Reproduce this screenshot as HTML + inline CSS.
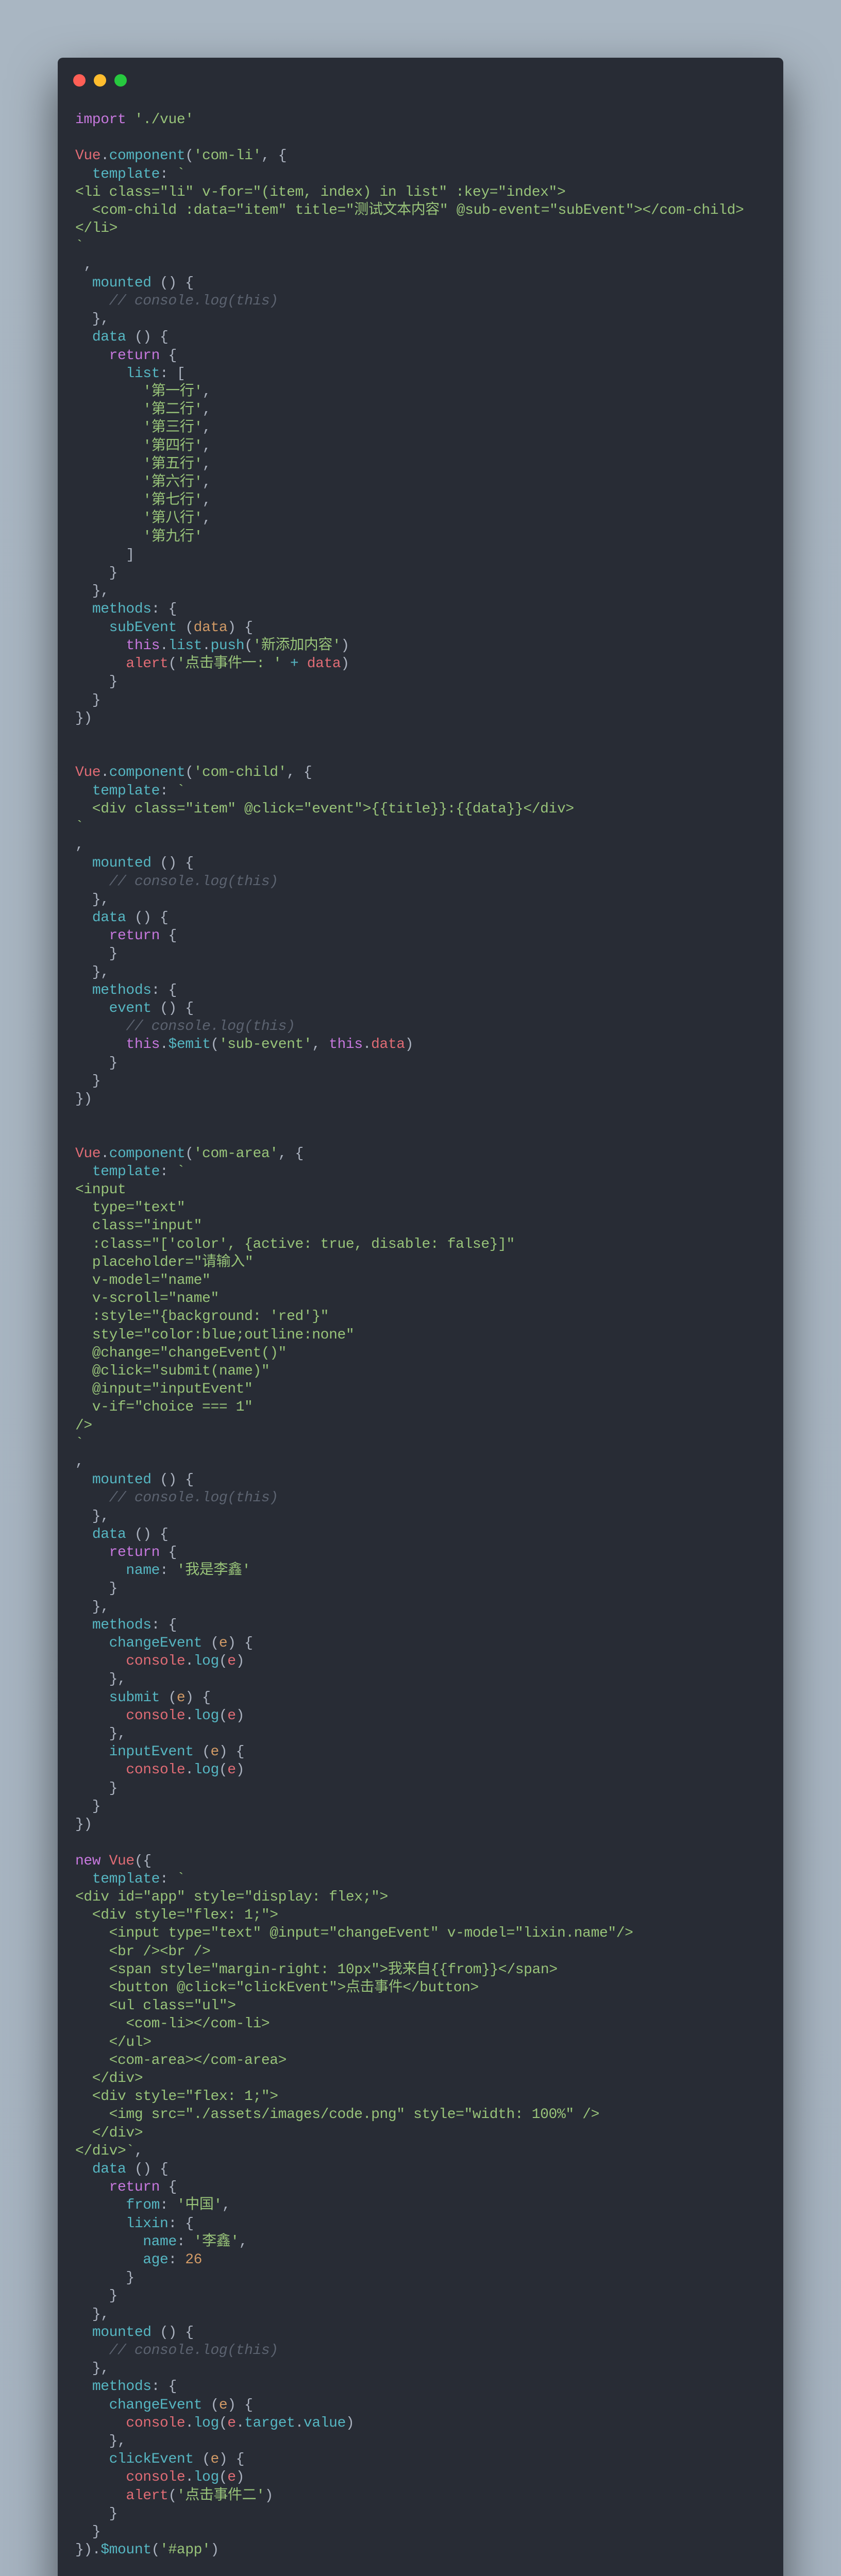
<!DOCTYPE html>
<html><head><meta charset="utf-8"><style>
html,body{margin:0;padding:0}
body{width:1632px;height:5160px;background:linear-gradient(180deg,#a9b6c2,#a6b3c0);position:relative;overflow:hidden}
.card{position:absolute;left:112px;top:112px;width:1408px;height:4936px;background:#282c35;border-radius:10px;box-shadow:0 40px 90px rgba(0,0,0,.55)}
.dot{position:absolute;top:144px;width:24px;height:24px;border-radius:50%}
pre{position:absolute;left:146px;top:215px;margin:0;font-family:"Liberation Mono","Noto Sans CJK SC",monospace;font-size:28px;letter-spacing:-0.4px;line-height:35.2px;color:#abb2bf}
.k{color:#c678dd}.r{color:#e06c75}.c{color:#56b6c2}.s{color:#98c379}.m{color:#5c6370;font-style:italic}.o{color:#d19a66}
</style></head><body>
<div class="card"></div>
<div class="dot" style="left:142px;background:#ff5f56"></div>
<div class="dot" style="left:182px;background:#ffbd2e"></div>
<div class="dot" style="left:222px;background:#27c93f"></div>
<pre><span class="k">import</span> <span class="s">'./vue'</span>

<span class="r">Vue</span>.<span class="c">component</span>(<span class="s">'com-li'</span>, {
  <span class="c">template</span>: <span class="s">`
&lt;li class="li" v-for="(item, index) in list" :key="index"&gt;
  &lt;com-child :data="item" title="测试文本内容" @sub-event="subEvent"&gt;&lt;/com-child&gt;
&lt;/li&gt;
`</span>
 ,
  <span class="c">mounted</span> () {
    <span class="m">// console.log(this)</span>
  },
  <span class="c">data</span> () {
    <span class="k">return</span> {
      <span class="c">list</span>: [
        <span class="s">'第一行'</span>,
        <span class="s">'第二行'</span>,
        <span class="s">'第三行'</span>,
        <span class="s">'第四行'</span>,
        <span class="s">'第五行'</span>,
        <span class="s">'第六行'</span>,
        <span class="s">'第七行'</span>,
        <span class="s">'第八行'</span>,
        <span class="s">'第九行'</span>
      ]
    }
  },
  <span class="c">methods</span>: {
    <span class="c">subEvent</span> (<span class="o">data</span>) {
      <span class="k">this</span>.<span class="c">list</span>.<span class="c">push</span>(<span class="s">'新添加内容'</span>)
      <span class="r">alert</span>(<span class="s">'点击事件一: '</span> <span class="c">+</span> <span class="r">data</span>)
    }
  }
})


<span class="r">Vue</span>.<span class="c">component</span>(<span class="s">'com-child'</span>, {
  <span class="c">template</span>: <span class="s">`
  &lt;div class="item" @click="event"&gt;{{title}}:{{data}}&lt;/div&gt;
`</span>
,
  <span class="c">mounted</span> () {
    <span class="m">// console.log(this)</span>
  },
  <span class="c">data</span> () {
    <span class="k">return</span> {
    }
  },
  <span class="c">methods</span>: {
    <span class="c">event</span> () {
      <span class="m">// console.log(this)</span>
      <span class="k">this</span>.<span class="c">$emit</span>(<span class="s">'sub-event'</span>, <span class="k">this</span>.<span class="r">data</span>)
    }
  }
})


<span class="r">Vue</span>.<span class="c">component</span>(<span class="s">'com-area'</span>, {
  <span class="c">template</span>: <span class="s">`
&lt;input
  type="text"
  class="input"
  :class="['color', {active: true, disable: false}]"
  placeholder="请输入"
  v-model="name"
  v-scroll="name"
  :style="{background: 'red'}"
  style="color:blue;outline:none"
  @change="changeEvent()"
  @click="submit(name)"
  @input="inputEvent"
  v-if="choice === 1"
/&gt;
`</span>
,
  <span class="c">mounted</span> () {
    <span class="m">// console.log(this)</span>
  },
  <span class="c">data</span> () {
    <span class="k">return</span> {
      <span class="c">name</span>: <span class="s">'我是李鑫'</span>
    }
  },
  <span class="c">methods</span>: {
    <span class="c">changeEvent</span> (<span class="o">e</span>) {
      <span class="r">console</span>.<span class="c">log</span>(<span class="r">e</span>)
    },
    <span class="c">submit</span> (<span class="o">e</span>) {
      <span class="r">console</span>.<span class="c">log</span>(<span class="r">e</span>)
    },
    <span class="c">inputEvent</span> (<span class="o">e</span>) {
      <span class="r">console</span>.<span class="c">log</span>(<span class="r">e</span>)
    }
  }
})

<span class="k">new</span> <span class="r">Vue</span>({
  <span class="c">template</span>: <span class="s">`
&lt;div id="app" style="display: flex;"&gt;
  &lt;div style="flex: 1;"&gt;
    &lt;input type="text" @input="changeEvent" v-model="lixin.name"/&gt;
    &lt;br /&gt;&lt;br /&gt;
    &lt;span style="margin-right: 10px"&gt;我来自{{from}}&lt;/span&gt;
    &lt;button @click="clickEvent"&gt;点击事件&lt;/button&gt;
    &lt;ul class="ul"&gt;
      &lt;com-li&gt;&lt;/com-li&gt;
    &lt;/ul&gt;
    &lt;com-area&gt;&lt;/com-area&gt;
  &lt;/div&gt;
  &lt;div style="flex: 1;"&gt;
    &lt;img src="./assets/images/code.png" style="width: 100%" /&gt;
  &lt;/div&gt;
&lt;/div&gt;`</span>,
  <span class="c">data</span> () {
    <span class="k">return</span> {
      <span class="c">from</span>: <span class="s">'中国'</span>,
      <span class="c">lixin</span>: {
        <span class="c">name</span>: <span class="s">'李鑫'</span>,
        <span class="c">age</span>: <span class="o">26</span>
      }
    }
  },
  <span class="c">mounted</span> () {
    <span class="m">// console.log(this)</span>
  },
  <span class="c">methods</span>: {
    <span class="c">changeEvent</span> (<span class="o">e</span>) {
      <span class="r">console</span>.<span class="c">log</span>(<span class="r">e</span>.<span class="c">target</span>.<span class="c">value</span>)
    },
    <span class="c">clickEvent</span> (<span class="o">e</span>) {
      <span class="r">console</span>.<span class="c">log</span>(<span class="r">e</span>)
      <span class="r">alert</span>(<span class="s">'点击事件二'</span>)
    }
  }
}).<span class="c">$mount</span>(<span class="s">'#app'</span>)</pre>
</body></html>
